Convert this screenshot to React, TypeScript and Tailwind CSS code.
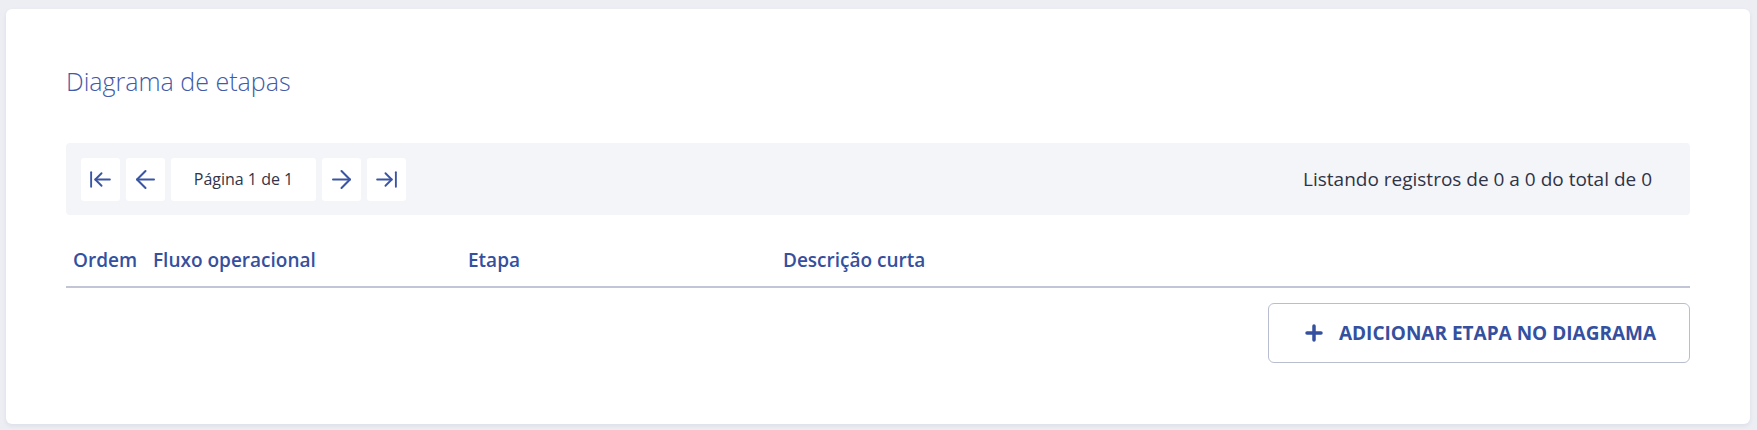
import { ArrowLeft, ArrowRight, ArrowLeftToLine, ArrowRightToLine, Plus } from 'lucide-react';

const COLUMNS = [
  { label: 'Ordem', width: 'w-[80px]' },
  { label: 'Fluxo operacional', width: 'w-[315px]' },
  { label: 'Etapa', width: 'w-[315px]' },
  { label: 'Descrição curta', width: 'flex-1' },
];

function PagerButton({ children }: { children: React.ReactNode }) {
  return (
    <button className="flex h-[43px] w-[39px] items-center justify-center rounded-[3px] bg-white text-[#3a55a4]">
      {children}
    </button>
  );
}

export default function App() {
  return (
    <div
      className="min-h-[430px] bg-[#eceef4] pt-[9px] pl-[6px] pr-[7px] pb-[6px]"
      style={{ fontFamily: '"Open Sans", "Noto Sans", sans-serif' }}
    >
      <div className="rounded-[6px] bg-white px-[60px] pt-[55px] pb-[61px] shadow-[0_2px_4px_rgba(40,50,90,0.08)]">
        {/* Title */}
        <h2 className="text-[25px] leading-[34px] font-light text-[#3f5ba9]">Diagrama de etapas</h2>

        {/* Pagination bar */}
        <div className="mt-[45px] flex h-[72px] items-center justify-between rounded-[4px] bg-[#f4f5f9] pl-[15px] pr-[38px]">
          <div className="flex items-center gap-[6px]">
            <PagerButton>
              <ArrowLeftToLine size={25} strokeWidth={1.8} />
            </PagerButton>
            <PagerButton>
              <ArrowLeft size={29} strokeWidth={1.7} />
            </PagerButton>
            <div className="flex h-[43px] w-[145px] items-center justify-center rounded-[3px] bg-white text-[16px] text-[#30354a]">
              Página 1 de 1
            </div>
            <PagerButton>
              <ArrowRight size={29} strokeWidth={1.7} />
            </PagerButton>
            <PagerButton>
              <ArrowRightToLine size={25} strokeWidth={1.8} />
            </PagerButton>
          </div>
          <span className="text-[19px] text-[#2f3346]">Listando registros de 0 a 0 do total de 0</span>
        </div>

        {/* Table header */}
        <div className="flex h-[73px] items-end border-b-2 border-[#c2c5d6] pb-[12px] pl-[7px]">
          {COLUMNS.map((c) => (
            <div key={c.label} className={`${c.width} text-[19px] leading-[28px] font-semibold text-[#34509f]`}>
              {c.label}
            </div>
          ))}
        </div>

        {/* Add button */}
        <div className="mt-[15px] flex justify-end">
          <button className="flex h-[60px] w-[422px] items-center justify-center gap-[13px] rounded-[6px] border border-[#b9bdd0] bg-white text-[19px] font-bold text-[#34509f]">
            <Plus size={24} strokeWidth={3.5} />
            ADICIONAR ETAPA NO DIAGRAMA
          </button>
        </div>
      </div>
    </div>
  );
}
